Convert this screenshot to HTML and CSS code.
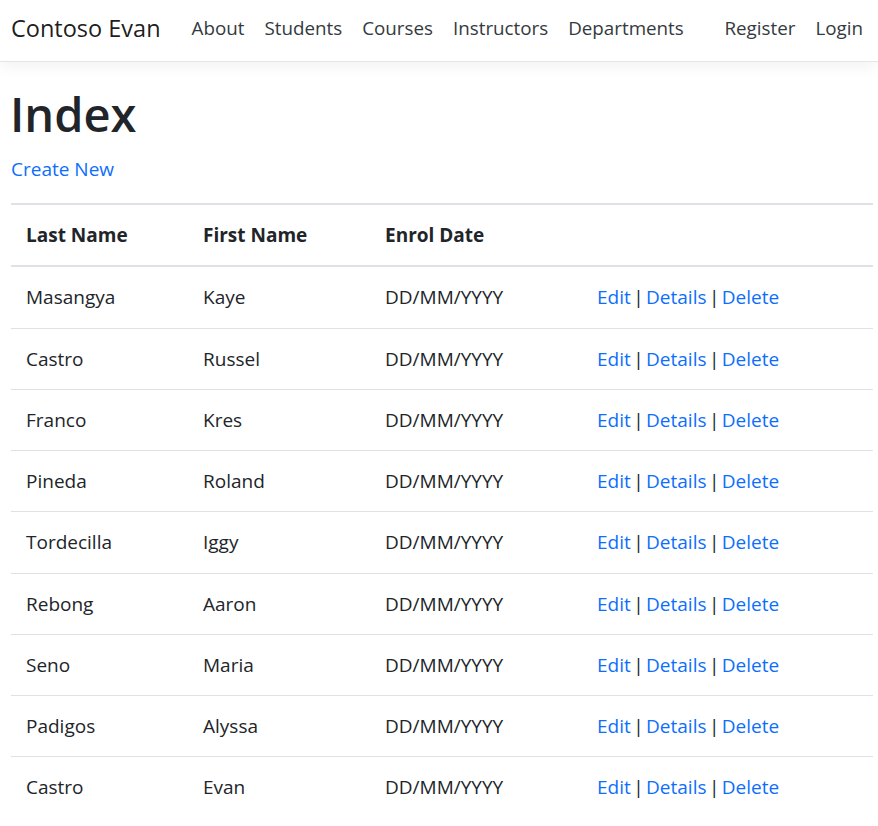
FILE: index.html
```html
<!DOCTYPE html>
<html lang="en">
<head>
<meta charset="utf-8">
<title>Index - Contoso Evan</title>
<link rel="stylesheet" href="styles.css">
</head>
<body>
<header class="navbar">
  <a class="brand" href="#">Contoso Evan</a>
  <nav class="nav-main">
    <a class="nav-link" href="#">About</a>
    <a class="nav-link" href="#">Students</a>
    <a class="nav-link" href="#">Courses</a>
    <a class="nav-link" href="#">Instructors</a>
    <a class="nav-link" href="#">Departments</a>
  </nav>
  <nav class="nav-user">
    <a class="nav-link" href="#">Register</a>
    <a class="nav-link" href="#">Login</a>
  </nav>
</header>
<main class="content">
  <h1 class="title">Index</h1>
  <p class="create"><a href="#">Create New</a></p>
  <table class="table">
    <thead>
      <tr><th class="c1">Last Name</th><th class="c2">First Name</th><th class="c3">Enrol Date</th><th class="c4"></th></tr>
    </thead>
    <tbody>
      <tr><td>Masangya</td><td>Kaye</td><td>DD/MM/YYYY</td><td class="actions"><a href="#">Edit</a> | <a href="#">Details</a> | <a href="#">Delete</a></td></tr>
      <tr><td>Castro</td><td>Russel</td><td>DD/MM/YYYY</td><td class="actions"><a href="#">Edit</a> | <a href="#">Details</a> | <a href="#">Delete</a></td></tr>
      <tr><td>Franco</td><td>Kres</td><td>DD/MM/YYYY</td><td class="actions"><a href="#">Edit</a> | <a href="#">Details</a> | <a href="#">Delete</a></td></tr>
      <tr><td>Pineda</td><td>Roland</td><td>DD/MM/YYYY</td><td class="actions"><a href="#">Edit</a> | <a href="#">Details</a> | <a href="#">Delete</a></td></tr>
      <tr><td>Tordecilla</td><td>Iggy</td><td>DD/MM/YYYY</td><td class="actions"><a href="#">Edit</a> | <a href="#">Details</a> | <a href="#">Delete</a></td></tr>
      <tr><td>Rebong</td><td>Aaron</td><td>DD/MM/YYYY</td><td class="actions"><a href="#">Edit</a> | <a href="#">Details</a> | <a href="#">Delete</a></td></tr>
      <tr><td>Seno</td><td>Maria</td><td>DD/MM/YYYY</td><td class="actions"><a href="#">Edit</a> | <a href="#">Details</a> | <a href="#">Delete</a></td></tr>
      <tr><td>Padigos</td><td>Alyssa</td><td>DD/MM/YYYY</td><td class="actions"><a href="#">Edit</a> | <a href="#">Details</a> | <a href="#">Delete</a></td></tr>
      <tr><td>Castro</td><td>Evan</td><td>DD/MM/YYYY</td><td class="actions"><a href="#">Edit</a> | <a href="#">Details</a> | <a href="#">Delete</a></td></tr>
    </tbody>
  </table>
</main>
</body>
</html>
```

FILE: styles.css
```css
html, body {
  margin: 0;
  padding: 0;
}
body {
  font-family: "Open Sans", "Noto Sans", "Liberation Sans", sans-serif;
  font-size: 19px;
  line-height: 30px;
  color: #212529;
  background: #fff;
  overflow: hidden;
}
a {
  color: #0d6efd;
  text-decoration: none;
}
.navbar {
  box-sizing: border-box;
  display: flex;
  align-items: center;
  height: 62px;
  padding: 0 5px 6px 11px;
  border-bottom: 1px solid #e5e5e5;
  box-shadow: 0 5px 15px rgba(0, 0, 0, 0.05);
}
.brand {
  font-size: 23.5px;
  color: rgba(0, 0, 0, 0.9);
  margin-right: 21px;
}
.nav-main {
  display: flex;
  flex: 1;
}
.nav-user {
  display: flex;
}
.nav-link {
  font-size: 18.8px;
  color: #343a40;
  padding: 0 10px;
}
.content {
  padding: 0 5px 0 11px;
}
.title {
  font-size: 47px;
  font-weight: 600;
  line-height: 60px;
  margin: 22px 0 10px -1px;
}
.create {
  margin: 0 0 19px;
}
.table {
  width: 862px;
  border-collapse: collapse;
}
.table th,
.table td {
  text-align: left;
  vertical-align: top;
  padding: 15px 15px 15.25px;
  border-top: 1px solid #dee2e6;
}
.table th {
  font-weight: 700;
  border-top: 2px solid #dee2e6;
  border-bottom: 2px solid #dee2e6;
}
.actions {
  word-spacing: -2.5px;
}
.c1 { width: 147px; }
.c2 { width: 152px; }
.c3 { width: 182px; }
```
